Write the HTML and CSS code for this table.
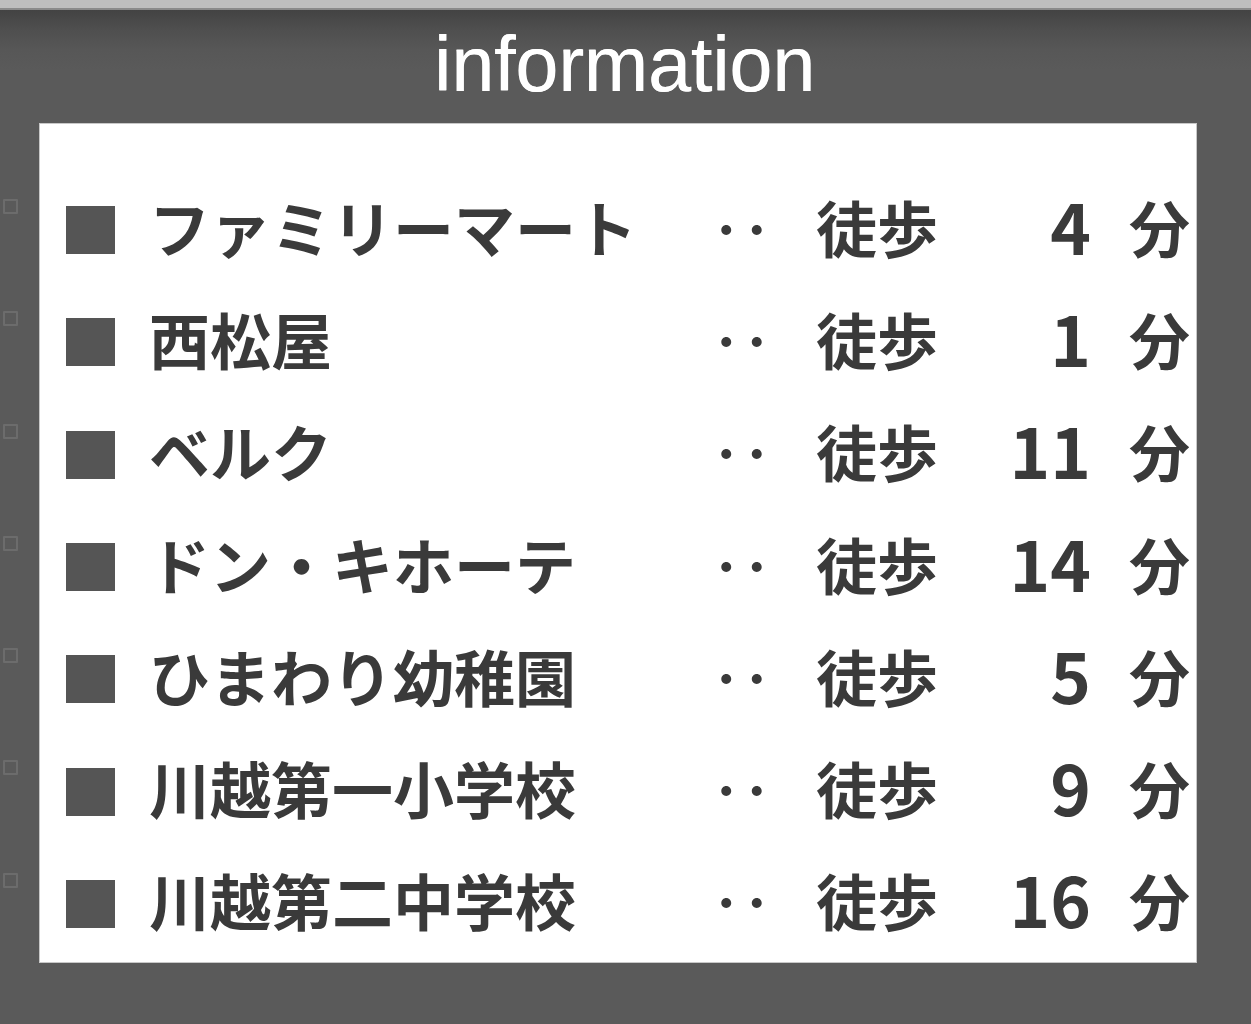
FILE: index.html
```html
<!DOCTYPE html>
<html lang="ja">
<head>
<meta charset="utf-8">
<title>information</title>
<link rel="stylesheet" href="styles.css">
</head>
<body>
<div class="topbar"></div>
<header class="header">
  <h1 class="title">information</h1>
</header>
<section class="panel">
  <ul class="list">
    <li class="row"><span class="mark"></span><span class="name">ファミリーマート</span><span class="dots">‥</span><span class="walk">徒歩</span><span class="num">4</span><span class="unit">分</span></li>
    <li class="row"><span class="mark"></span><span class="name">西松屋</span><span class="dots">‥</span><span class="walk">徒歩</span><span class="num">1</span><span class="unit">分</span></li>
    <li class="row"><span class="mark"></span><span class="name">ベルク</span><span class="dots">‥</span><span class="walk">徒歩</span><span class="num">11</span><span class="unit">分</span></li>
    <li class="row"><span class="mark"></span><span class="name">ドン・キホーテ</span><span class="dots">‥</span><span class="walk">徒歩</span><span class="num">14</span><span class="unit">分</span></li>
    <li class="row"><span class="mark"></span><span class="name">ひまわり幼稚園</span><span class="dots">‥</span><span class="walk">徒歩</span><span class="num">5</span><span class="unit">分</span></li>
    <li class="row"><span class="mark"></span><span class="name">川越第一小学校</span><span class="dots">‥</span><span class="walk">徒歩</span><span class="num">9</span><span class="unit">分</span></li>
    <li class="row"><span class="mark"></span><span class="name">川越第二中学校</span><span class="dots">‥</span><span class="walk">徒歩</span><span class="num">16</span><span class="unit">分</span></li>
  </ul>
</section>
</body>
</html>
```
FILE: styles.css
```css
html, body {
  margin: 0;
  padding: 0;
}
body {
  background: #5a5a5a;
  height: 1024px;
  overflow: hidden;
  font-family: "Noto Sans CJK JP", "Liberation Sans", sans-serif;
}
.topbar {
  height: 8px;
  background: #bebebe;
  border-bottom: 2px solid #8a8a8a;
}
.header {
  height: 113px;
  background: linear-gradient(#434343 0px, #4f4f4f 20px, #575757 40px, #5a5a5a 60px);
  display: flex;
  justify-content: center;
}
.title {
  margin: 0;
  font-family: "Liberation Sans", sans-serif;
  font-weight: 400;
  font-size: 77px;
  line-height: 1;
  color: #ffffff;
  padding-top: 16px;
  padding-right: 2px;
  text-shadow: 0.5px 0 0 #ffffff;
}
.panel {
  margin-left: 39px;
  width: 1156px;
  height: 838px;
  background: #ffffff;
  border: 1px solid #c8c8c8;
  box-sizing: content-box;
}
.list {
  list-style: none;
  margin: 0;
  padding: 50px 0 0 20px;
}
.row {
  position: relative;
  display: grid;
  grid-template-columns: 89px 566px 100px 184px 93px 1fr;
  align-items: center;
  height: 112.3px;
  font-size: 61px;
  font-weight: 700;
  color: #3a3a3a;
}
.row::before {
  content: "";
  position: absolute;
  left: -57px;
  top: 25px;
  width: 11px;
  height: 11px;
  border: 2px solid #6c6c6c;
  border-radius: 1px;
  filter: blur(0.6px);
}
.mark {
  display: block;
  width: 49px;
  height: 48px;
  margin-left: 6px;
  background: #555555;
}
.name,
.dots,
.walk,
.unit {
  line-height: 1;
  padding-bottom: 8px;
}
.name {
  white-space: nowrap;
}
.dots {
  margin-left: -4px;
}
.walk {
  margin-left: 1px;
}
.num {
  text-align: right;
  font-size: 69px;
  line-height: 1;
  padding-bottom: 10px;
  padding-right: 1px;
}
.unit {
  padding-left: 37px;
}
```
